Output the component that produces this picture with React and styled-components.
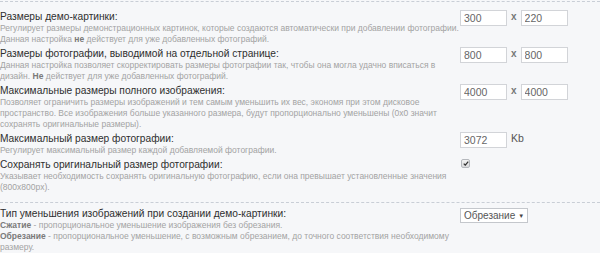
import React from "react";
import styled, { createGlobalStyle } from "styled-components";

const GlobalStyle = createGlobalStyle`
  html, body {
    margin: 0;
    padding: 0;
    background: #f6f7f9;
  }
  body {
    font-family: "Liberation Sans", Arial, sans-serif;
  }
`;

const Page = styled.div`
  width: 600px;
  height: 253px;
  overflow: hidden;
  background: #f6f7f9;
`;

const Group = styled.div`
  border-top: 1px dashed #c9ced6;
  margin-top: ${({ $first }) => ($first ? "1px" : "0")};
  padding: ${({ $first }) => ($first ? "8px 0 7px" : "4px 0 0")};
`;

const Row = styled.div`
  display: grid;
  grid-template-columns: 460px 1fr;
  padding-bottom: 2px;
`;

const Label = styled.div`
  display: flex;
  flex-direction: column;
`;

const Title = styled.div`
  font-size: 10.2px;
  line-height: 13px;
  color: #2f2f2f;
  white-space: nowrap;
`;

const Hint = styled.div`
  font-size: 8.5px;
  line-height: 11px;
  color: #a3a3a3;
  white-space: nowrap;

  b {
    color: #7a7a7a;
    font-weight: bold;
  }
`;

const Controls = styled.div`
  display: flex;
  align-items: flex-start;
  gap: 3px;
  padding-top: ${({ $top }) => $top || 0}px;
`;

const NumInput = styled.input`
  box-sizing: border-box;
  width: 47px;
  height: 16px;
  padding: 0 3px;
  margin: 0;
  border: 1px solid #d2d4d8;
  background: #fff;
  font-family: "Liberation Sans", Arial, sans-serif;
  font-size: 10.5px;
  color: #666;
  outline: none;
`;

const Times = styled.span`
  font-size: 10px;
  line-height: 14px;
  font-weight: bold;
  color: #777;
  padding: 0 1px;
`;

const Unit = styled.span`
  font-size: 10.5px;
  line-height: 12px;
  color: #555;
  margin-left: 1px;
`;

const Check = styled.span`
  display: inline-flex;
  align-items: center;
  justify-content: center;
  width: 7px;
  height: 7px;
  margin-left: 1px;
  border: 1px solid #b5b8bd;
  border-radius: 2px;
  background: linear-gradient(#f3f3f3, #d9dadc);
`;

const Select = styled.div`
  box-sizing: border-box;
  display: inline-flex;
  align-items: center;
  gap: 3px;
  height: 15px;
  padding: 0 3px;
  border: 1px solid #c4c7cc;
  background: #fff;
  font-size: 10px;
  color: #555;

  &::after {
    content: "▼";
    font-size: 6px;
    color: #444;
  }
`;

const Dims = ({ a, b }) => (
  <Controls>
    <NumInput defaultValue={a} />
    <Times>x</Times>
    <NumInput defaultValue={b} />
  </Controls>
);

const App = () => (
  <Page>
    <GlobalStyle />
    <Group $first>
      <Row>
        <Label>
          <Title>Размеры демо-картинки:</Title>
          <Hint>
            Регулирует размеры демонстрационных картинок, которые создаются автоматически при добавлении фотографии.
            <br />
            Данная настройка <b>не</b> действует для уже добавленных фотографий.
          </Hint>
        </Label>
        <Dims a="300" b="220" />
      </Row>
      <Row>
        <Label>
          <Title>Размеры фотографии, выводимой на отдельной странице:</Title>
          <Hint>
            Данная настройка позволяет скорректировать размеры фотографии так, чтобы она могла удачно вписаться в
            <br />
            дизайн. <b>Не</b> действует для уже добавленных фотографий.
          </Hint>
        </Label>
        <Dims a="800" b="800" />
      </Row>
      <Row>
        <Label>
          <Title>Максимальные размеры полного изображения:</Title>
          <Hint>
            Позволяет ограничить размеры изображений и тем самым уменьшить их вес, экономя при этом дисковое
            <br />
            пространство. Все изображения больше указанного размера, будут пропорционально уменьшены (0x0 значит
            <br />
            сохранять оригинальные размеры).
          </Hint>
        </Label>
        <Dims a="4000" b="4000" />
      </Row>
      <Row>
        <Label>
          <Title>Максимальный размер фотографии:</Title>
          <Hint>Регулирует максимальный размер каждой добавляемой фотографии.</Hint>
        </Label>
        <Controls $top={-1}>
          <NumInput defaultValue="3072" />
          <Unit>Kb</Unit>
        </Controls>
      </Row>
      <Row>
        <Label>
          <Title>Сохранять оригинальный размер фотографии:</Title>
          <Hint>
            Указывает необходимость сохранять оригинальную фотографию, если она превышает установленные значения
            <br />
            (800x800px).
          </Hint>
        </Label>
        <Controls $top={1}>
          <Check>
            <svg width="6" height="5" viewBox="0 0 7 6">
              <path d="M0.8 3.2 L2.6 5 L6.2 0.8" fill="none" stroke="#333" strokeWidth="1.5" />
            </svg>
          </Check>
        </Controls>
      </Row>
    </Group>
    <Group>
      <Row>
        <Label>
          <Title>Тип уменьшения изображений при создании демо-картинки:</Title>
          <Hint>
            <b>Сжатие</b> - пропорциональное уменьшение изображения без обрезания.
            <br />
            <b>Обрезание</b> - пропорциональное уменьшение, с возможным обрезанием, до точного соответствия необходимому
            <br />
            размеру.
          </Hint>
        </Label>
        <Controls $top={1}>
          <Select>Обрезание</Select>
        </Controls>
      </Row>
    </Group>
  </Page>
);

export default App;
